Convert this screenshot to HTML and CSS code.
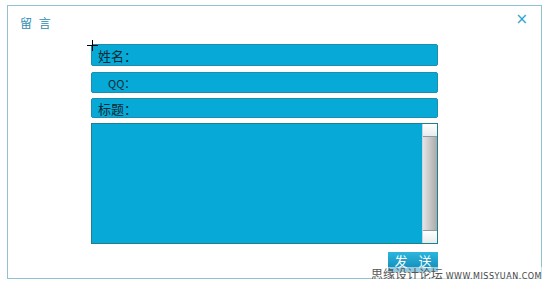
FILE: index.html
```html
<!DOCTYPE html>
<html lang="zh-CN">
<head>
  <meta charset="UTF-8">
  <title>留言</title>
  <link rel="stylesheet" href="styles.css">
</head>
<body>

  <div class="dialog">
    <div class="dialog-head">
      <span class="dialog-title">留 言</span>
      <span class="dialog-close">&times;</span>
    </div>

    <form class="msg-form">
      <div class="field">
        <label>姓名：</label>
      </div>
      <div class="field field-qq">
        <label>QQ：</label>
      </div>
      <div class="field field-title">
        <label>标题：</label>
      </div>
      <div class="field-body">
        <div class="scrollbar">
          <div class="scroll-btn"></div>
          <div class="scroll-thumb"></div>
          <div class="scroll-btn"></div>
        </div>
      </div>
      <div class="actions">
        <button type="button" class="send-btn">发 送</button>
      </div>
    </form>

    <span class="cursor"></span>
    <div class="watermark">思缘设计论坛 <span class="wm-url">WWW.MISSYUAN.COM</span></div>
  </div>

</body>
</html>
```

FILE: styles.css
```css
body {
  margin: 0;
  background: #fff;
  font-family: "Noto Sans CJK SC", "Liberation Sans", sans-serif;
}
.dialog {
  position: relative;
  margin: 5px 0 0 7px;
  width: 535px;
  height: 274px;
  border: 1px solid #8fc3d3;
  box-sizing: border-box;
}
.dialog-head {
  display: flex;
  justify-content: space-between;
  padding: 7px 13px 0 12px;
  height: 30px;
  box-sizing: border-box;
}
.dialog-title {
  color: #2f8db3;
  font-size: 12px;
  letter-spacing: 2px;
  line-height: 18px;
  padding-top: 1px;
}
.dialog-close {
  color: #2ea6cf;
  font-family: "DejaVu Sans", sans-serif;
  font-size: 15px;
  line-height: 18px;
  margin-top: -3px;
}
.msg-form {
  display: flex;
  flex-direction: column;
  padding: 8px 0 0 83px;
  width: 347px;
}
.field {
  height: 22px;
  background: #07aad7;
  border: 1px solid #1f8eae;
  border-radius: 2px;
  box-sizing: border-box;
  margin-bottom: 6px;
  display: flex;
  align-items: center;
  padding-left: 6px;
}
.field-qq {
  height: 21px;
  margin-bottom: 5px;
  padding-left: 16px;
}
.field-title {
  height: 20px;
  margin-bottom: 5px;
}
.field label {
  font-size: 13px;
  color: #0c2a36;
}
.field-qq label {
  font-size: 11px;
}
.field-body {
  height: 121px;
  background: #07aad7;
  border: 1px solid #1f8088;
  box-sizing: border-box;
  display: flex;
  justify-content: flex-end;
}
.scrollbar {
  width: 14px;
  display: flex;
  flex-direction: column;
  border-left: 1px solid #c8d6dc;
}
.scroll-btn {
  height: 12px;
  background: linear-gradient(#ffffff, #e8ecee);
}
.scroll-thumb {
  flex: 1;
  background: linear-gradient(90deg, #e4e4e4, #a9a9a9);
  border-top: 1px solid #8a9aa2;
  border-bottom: 1px solid #8a9aa2;
}
.actions {
  display: flex;
  justify-content: flex-end;
  padding-top: 8px;
}
.send-btn {
  width: 50px;
  height: 20px;
  border: none;
  background: linear-gradient(#2cb6dd, #0f87b5);
  color: #fff;
  font-family: "Noto Sans CJK SC", sans-serif;
  font-size: 13px;
  letter-spacing: 4px;
  line-height: 18px;
  padding: 0 0 2px 4px;
}
.cursor {
  position: absolute;
  left: 79px;
  top: 34px;
  width: 11px;
  height: 11px;
  background:
    linear-gradient(#000, #000) 5px 0 / 1px 11px no-repeat,
    linear-gradient(#000, #000) 0 5px / 11px 1px no-repeat;
}
.watermark {
  position: absolute;
  right: -1px;
  bottom: -6px;
  color: #555;
  font-size: 12px;
  line-height: 14px;
  background: rgba(255, 255, 255, 0.55);
  white-space: nowrap;
}
.wm-url {
  font-family: "DejaVu Sans", sans-serif;
  font-size: 8px;
  letter-spacing: 0.5px;
  color: #444;
}
```
